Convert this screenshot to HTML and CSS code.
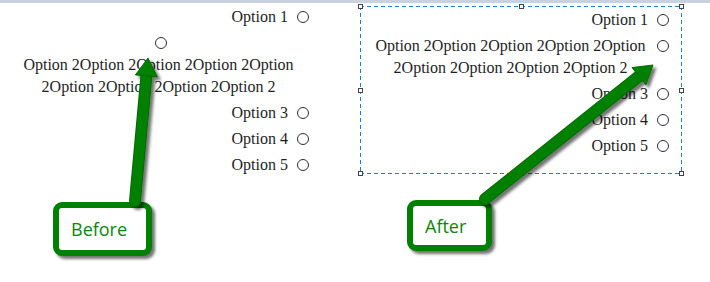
FILE: index.html
```html
<!DOCTYPE html>
<html>
<head>
<meta charset="utf-8">
<link rel="stylesheet" href="styles.css">
</head>
<body>
<div class="strip"></div>
<div class="stage">
  <div class="panel before">
    <div class="opt"><span class="label">Option 1</span><span class="radio"></span></div>
    <div class="opt-broken">
      <span class="radio"></span>
      <span class="label wrap">Option 2Option 2Option 2Option 2Option 2Option 2Option 2Option 2Option 2</span>
    </div>
    <div class="opt"><span class="label">Option 3</span><span class="radio"></span></div>
    <div class="opt"><span class="label">Option 4</span><span class="radio"></span></div>
    <div class="opt"><span class="label">Option 5</span><span class="radio"></span></div>
  </div>
  <div class="panel after">
    <div class="opt"><span class="label">Option 1</span><span class="radio"></span></div>
    <div class="opt opt-tall"><span class="label wrap">Option 2Option 2Option 2Option 2Option 2Option 2Option 2Option 2Option 2</span><span class="radio top"></span></div>
    <div class="opt"><span class="label">Option 3</span><span class="radio"></span></div>
    <div class="opt"><span class="label">Option 4</span><span class="radio"></span></div>
    <div class="opt"><span class="label">Option 5</span><span class="radio"></span></div>
    <span class="handle h-tl"></span>
    <span class="handle h-tm"></span>
    <span class="handle h-tr"></span>
    <span class="handle h-ml"></span>
    <span class="handle h-mr"></span>
    <span class="handle h-bl"></span>
    <span class="handle h-bm"></span>
    <span class="handle h-br"></span>
  </div>
  <div class="callout callout-before">Before</div>
  <div class="callout callout-after">After</div>
  <svg class="arrows" width="710" height="282" viewBox="0 0 710 282" xmlns="http://www.w3.org/2000/svg">
    <defs>
      <filter id="sh" x="-30%" y="-30%" width="160%" height="160%">
        <feDropShadow dx="3" dy="3" stdDeviation="1.8" flood-color="#000" flood-opacity="0.55"/>
      </filter>
    </defs>
    <g filter="url(#sh)">
      <line x1="135" y1="201" x2="146.4" y2="76" stroke="#006a00" stroke-width="12" stroke-linecap="round"/>
      <line x1="135" y1="201" x2="146.4" y2="76" stroke="#008000" stroke-width="10" stroke-linecap="round"/>
      <polygon points="148,58 157.3,76.9 135.4,74.9" fill="#008000" stroke="#006a00" stroke-width="1" stroke-linejoin="round"/>
    </g>
    <g filter="url(#sh)">
      <line x1="485" y1="199" x2="638.9" y2="76.2" stroke="#006a00" stroke-width="12" stroke-linecap="round"/>
      <line x1="485" y1="199" x2="638.9" y2="76.2" stroke="#008000" stroke-width="10" stroke-linecap="round"/>
      <polygon points="653,65 645.8,84.8 632,67.6" fill="#008000" stroke="#006a00" stroke-width="1" stroke-linejoin="round"/>
    </g>
  </svg>
</div>
</body>
</html>
```
FILE: styles.css
```css
html, body {
  margin: 0;
  padding: 0;
  background: #ffffff;
}
body {
  width: 710px;
  height: 282px;
  overflow: hidden;
  font-family: "Liberation Serif", "Times New Roman", serif;
  font-size: 16px;
  color: #1e1e24;
}
.strip {
  height: 3px;
  background: #c9d1de;
}
.stage {
  position: relative;
  display: flex;
  align-items: flex-start;
  height: 279px;
}
.panel {
  display: flex;
  flex-direction: column;
}
.before {
  margin-left: 8px;
  margin-top: 1px;
  width: 301px;
}
.after {
  position: relative;
  box-sizing: border-box;
  margin-left: 51px;
  margin-top: 3px;
  width: 322px;
  height: 168px;
  padding: 1px 13px 15px 10px;
  background:
    repeating-linear-gradient(90deg, #1580dc 0 4px, transparent 4px 7px) left top / 100% 1px no-repeat,
    repeating-linear-gradient(90deg, #1580dc 0 4px, transparent 4px 7px) left bottom / 100% 1px no-repeat,
    repeating-linear-gradient(180deg, #1580dc 0 4px, transparent 4px 7px) left top / 1px 100% no-repeat,
    repeating-linear-gradient(180deg, #1580dc 0 4px, transparent 4px 7px) right top / 1px 100% no-repeat;
}
.opt {
  height: 26px;
  display: flex;
  justify-content: flex-end;
  align-items: center;
  gap: 9px;
}
.label {
  white-space: nowrap;
  line-height: 22px;
}
.label.wrap {
  white-space: normal;
  text-align: center;
}
.radio {
  flex: 0 0 auto;
  box-sizing: border-box;
  width: 12px;
  height: 12px;
  border: 1px solid #2c2c3c;
  border-radius: 50%;
  background: #fff;
}
.opt-broken {
  display: flex;
  flex-direction: column;
  align-items: center;
  padding: 7px 0 2px;
  height: 70px;
  box-sizing: border-box;
}
.opt-broken .radio {
  margin-left: 4px;
  margin-bottom: 5px;
}
.opt-tall {
  height: 48px;
  align-items: flex-start;
  padding-top: 2px;
  box-sizing: border-box;
  gap: 6px;
}
.opt-tall .label {
  flex: 0 1 auto;
}
.radio.top {
  margin-top: 5px;
}
.handle {
  position: absolute;
  box-sizing: border-box;
  width: 5px;
  height: 5px;
  border: 1px solid #444;
  background: #fff;
}
.h-tl { left: -2px; top: -2px; }
.h-tm { left: 159px; top: -2px; }
.h-tr { right: -2px; top: -2px; }
.h-ml { left: -2px; top: 82px; }
.h-mr { right: -2px; top: 82px; }
.h-bl { left: -2px; bottom: -2px; }
.h-bm { left: 159px; bottom: -2px; }
.h-br { right: -2px; bottom: -2px; }
.callout {
  position: absolute;
  box-sizing: border-box;
  display: flex;
  align-items: center;
  border: 6px solid #008000;
  border-radius: 9px;
  background: #fff;
  box-shadow: 3px 3px 3px rgba(0, 0, 0, 0.55);
  font-family: "Open Sans", "Noto Sans", sans-serif;
  font-size: 18px;
  color: #0a870a;
}
.callout-before {
  left: 53px;
  top: 199px;
  width: 99px;
  height: 54px;
  padding-left: 12px;
}
.callout-after {
  left: 407px;
  top: 197px;
  width: 85px;
  height: 51px;
  padding-left: 12px;
}
.arrows {
  position: absolute;
  left: 0;
  top: -3px;
  pointer-events: none;
}
```
